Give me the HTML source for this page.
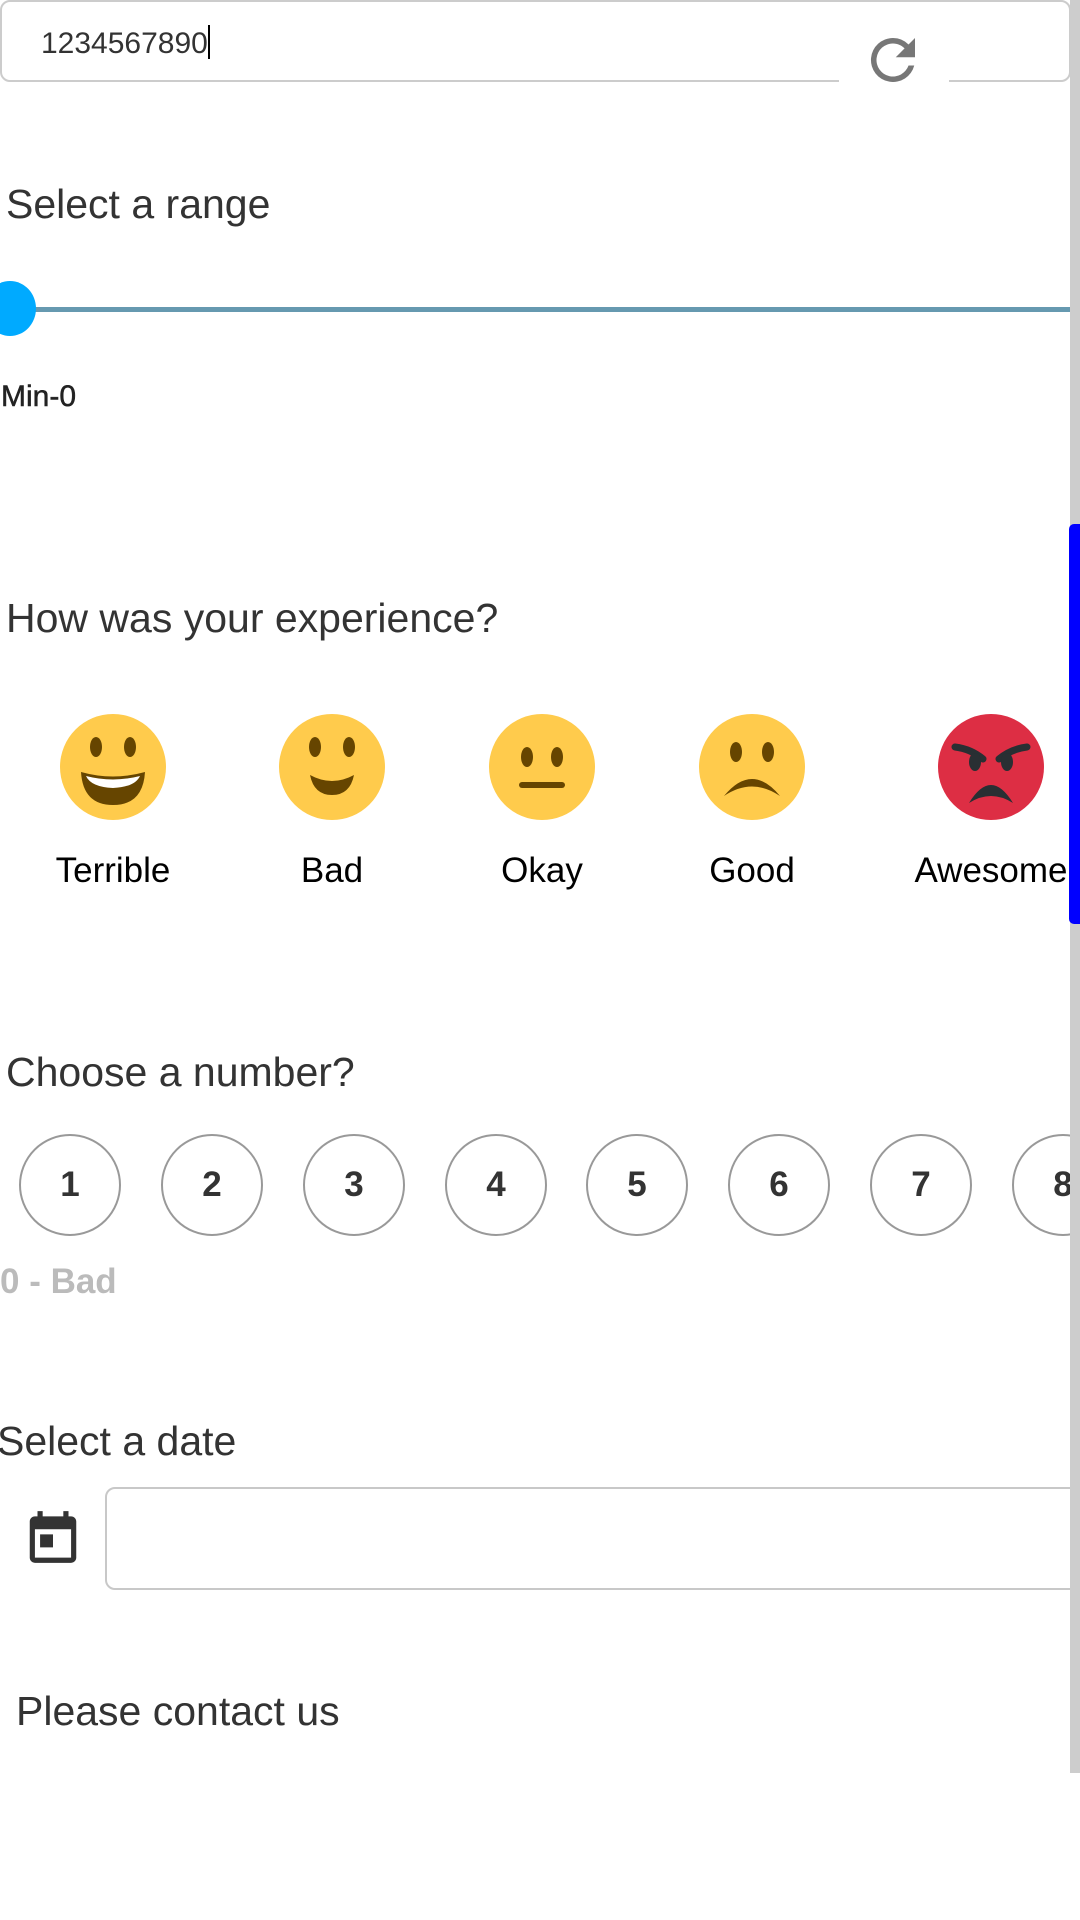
<!DOCTYPE html>
<html><head><meta charset="utf-8"><style>
html,body{margin:0;padding:0;width:1080px;height:1920px;overflow:hidden;background:#fff;font-family:"Liberation Sans",Arial,sans-serif;color:#333;}
.t{position:absolute;white-space:nowrap;line-height:normal;}
.h{font-size:41px;color:#333;}
.c{position:absolute;width:102px;height:102px;border:2px solid #999;border-radius:50%;box-sizing:border-box;text-align:center;font-weight:bold;font-size:35px;color:#333;line-height:98px;}
.lab{position:absolute;width:200px;text-align:center;font-size:35px;color:#000;line-height:normal;}
</style></head><body>
<div style="position:absolute;left:0;top:0;width:1071px;height:82px;border:2px solid #ccc;border-radius:10px;box-sizing:border-box;"></div>
<div style="position:absolute;left:839px;top:76px;width:110px;height:10px;background:#fff;"></div>
<div class="t" style="left:41px;top:25px;font-size:30px;color:#333;">1234567890<span style="display:inline-block;width:2px;height:34px;background:#000;vertical-align:-6px;"></span></div>
<svg style="position:absolute;left:860px;top:27px" width="66" height="66" viewBox="0 0 24 24"><path fill="#777" d="M17.65 6.35A7.96 7.96 0 0 0 12 4a8 8 0 1 0 7.73 10h-2.08A6 6 0 1 1 12 6c1.66 0 3.14.69 4.22 1.78L13 11h7V4l-2.35 2.35z"/></svg>

<div class="t h" style="left:6px;top:181px;">Select a range</div>
<div style="position:absolute;left:10px;top:307px;width:1060px;height:5px;background:#6699b0;"></div>
<div style="position:absolute;left:-16px;top:281px;width:52px;height:55px;border-radius:50%;background:#00aaff;"></div>
<div class="t" style="left:1px;top:380px;font-size:30px;color:#222;-webkit-text-stroke:0.5px #222;">Min-0</div>

<div class="t h" style="left:6px;top:595px;">How was your experience?</div>

<svg style="position:absolute;left:0;top:710px" width="1070" height="120">
<g transform="translate(113,57)"><circle r="53" fill="#ffcb4c"/><ellipse cx="-17" cy="-20" rx="6" ry="10" fill="#664500"/><ellipse cx="17" cy="-20" rx="6" ry="10" fill="#664500"/><path d="M-32 5 Q0 14 32 5 Q30 38 0 38 Q-30 38 -32 5Z" fill="#664500"/><path d="M-27 9 Q0 16 27 9 Q22 20 0 21 Q-22 20 -27 9Z" fill="#fff"/></g>
<g transform="translate(332,57)"><circle r="53" fill="#ffcb4c"/><ellipse cx="-17" cy="-20" rx="6" ry="10" fill="#664500"/><ellipse cx="17" cy="-20" rx="6" ry="10" fill="#664500"/><path d="M-22 8 Q0 20 22 8 Q18 28 0 28 Q-18 28 -22 8Z" fill="#664500"/></g>
<g transform="translate(542,57)"><circle r="53" fill="#ffcb4c"/><ellipse cx="-15" cy="-10" rx="6" ry="10" fill="#664500"/><ellipse cx="15" cy="-10" rx="6" ry="10" fill="#664500"/><rect x="-23" y="15" width="46" height="6" rx="3" fill="#664500"/></g>
<g transform="translate(752,57)"><circle r="53" fill="#ffcb4c"/><ellipse cx="-16" cy="-15" rx="6" ry="10" fill="#664500"/><ellipse cx="16" cy="-15" rx="6" ry="10" fill="#664500"/><path d="M-28 29 Q0 -5 28 29 Q0 10 -28 29Z" fill="#664500"/></g>
<g transform="translate(991,57)"><circle r="53" fill="#dd2e44"/><path d="M-36 -20 Q-20 -18 -8 -8" stroke="#292f33" stroke-width="7" stroke-linecap="round" fill="none"/><path d="M36 -20 Q20 -18 8 -8" stroke="#292f33" stroke-width="7" stroke-linecap="round" fill="none"/><ellipse cx="-16" cy="-5" rx="6" ry="9" fill="#292f33"/><ellipse cx="16" cy="-5" rx="6" ry="9" fill="#292f33"/><path d="M-22 36 Q0 0 22 36 Q0 22 -22 36Z" fill="#292f33"/></g>
</svg>
<div class="lab" style="left:13px;top:851px;">Terrible</div>
<div class="lab" style="left:232px;top:851px;">Bad</div>
<div class="lab" style="left:442px;top:851px;">Okay</div>
<div class="lab" style="left:652px;top:851px;">Good</div>
<div class="lab" style="left:891px;top:851px;">Awesome</div>

<div class="t h" style="left:6px;top:1049px;">Choose a number?</div>
<div class="c" style="left:19px;top:1134px;">1</div>
<div class="c" style="left:161px;top:1134px;">2</div>
<div class="c" style="left:303px;top:1134px;">3</div>
<div class="c" style="left:445px;top:1134px;">4</div>
<div class="c" style="left:586px;top:1134px;">5</div>
<div class="c" style="left:728px;top:1134px;">6</div>
<div class="c" style="left:870px;top:1134px;">7</div>
<div class="c" style="left:1012px;top:1134px;">8</div>
<div class="t" style="left:0;top:1262px;font-size:35px;font-weight:bold;color:#bbb;">0 - Bad</div>

<div class="t h" style="left:-3px;top:1418px;">Select a date</div>
<svg style="position:absolute;left:22px;top:1506px" width="62" height="62" viewBox="0 0 24 24"><path fill="#333" d="M19 4h-1V2h-2v2H8V2H6v2H5C3.9 4 3 4.9 3 6v14c0 1.1.9 2 2 2h14c1.1 0 2-.9 2-2V6c0-1.1-.9-2-2-2zm0 16H5V9h14v11zM7 11h5v5H7z"/></svg>
<div style="position:absolute;left:105px;top:1487px;width:1000px;height:103px;border:2px solid #c8c8c8;border-radius:10px;box-sizing:border-box;"></div>

<div class="t h" style="left:16px;top:1688px;">Please contact us</div>

<div style="position:absolute;left:1070px;top:0;width:10px;height:1773px;background:#cdcdcd;"></div>
<div style="position:absolute;left:1069px;top:524px;width:11px;height:400px;background:#0000ff;border-radius:5px 0 0 5px;"></div>
</body></html>
